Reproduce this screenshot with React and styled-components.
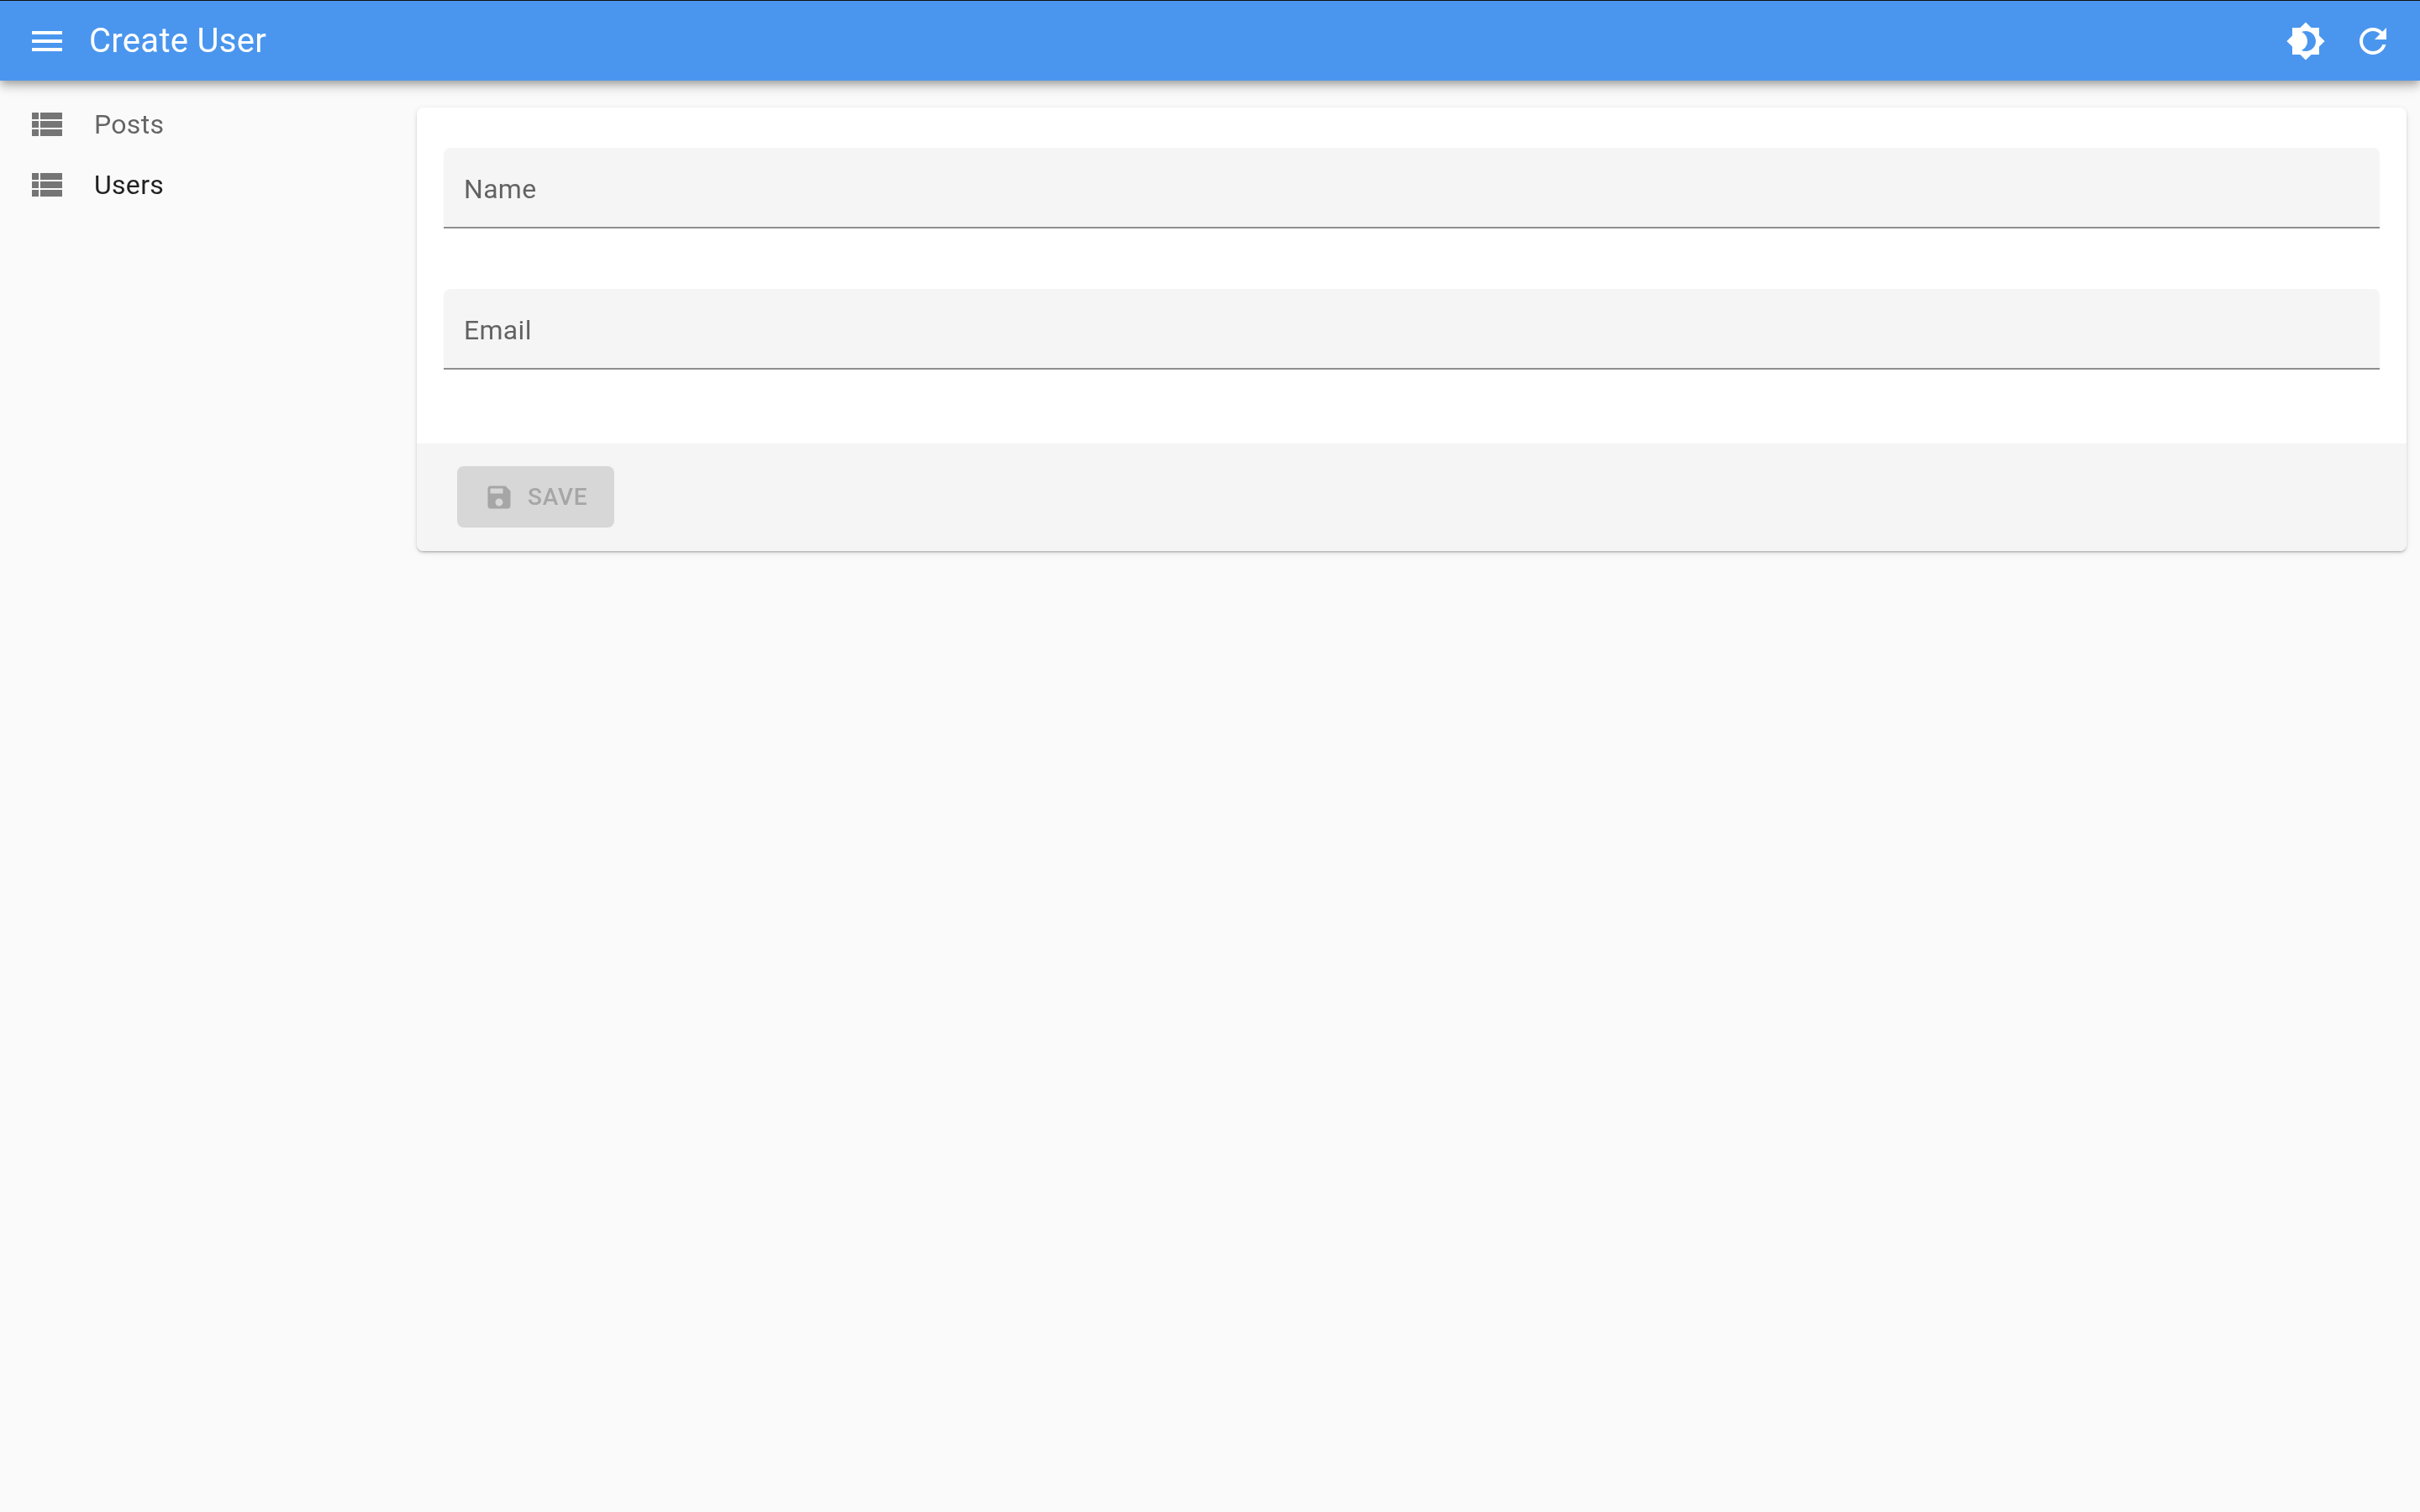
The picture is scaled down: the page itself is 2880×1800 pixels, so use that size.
import React from 'react';
import styled, { createGlobalStyle, css } from 'styled-components';

const GlobalStyle = createGlobalStyle`
    html, body {
        margin: 0;
        padding: 0;
        background: #fafafa;
        font-family: Roboto, "Liberation Sans", sans-serif;
    }
`

const paths = {
    menu: 'M3 18h18v-2H3v2zm0-5h18v-2H3v2zm0-7v2h18V6H3z',
    list: 'M3 14h4v-4H3v4zm0 5h4v-4H3v4zM3 9h4V5H3v4zm5 5h13v-4H8v4zm0 5h13v-4H8v4zM8 5v4h13V5H8z',
    brightness: 'M20 8.69V4h-4.69L12 .69 8.69 4H4v4.69L.69 12 4 15.31V20h4.69L12 23.31 15.31 20H20v-4.69L23.31 12 20 8.69zM12 18c-.89 0-1.74-.2-2.5-.55C11.56 16.5 13 14.42 13 12s-1.44-4.5-3.5-5.45C10.26 6.2 11.11 6 12 6c3.31 0 6 2.69 6 6s-2.69 6-6 6z',
    refresh: 'M17.65 6.35C16.2 4.9 14.21 4 12 4c-4.42 0-7.99 3.58-7.99 8s3.57 8 7.99 8c3.73 0 6.84-2.55 7.73-6h-2.08c-.82 2.33-3.04 4-5.65 4-3.31 0-6-2.69-6-6s2.69-6 6-6c1.66 0 3.14.69 4.22 1.78L13 11h7V4l-2.35 2.35z',
    save: 'M17 3H5c-1.11 0-2 .9-2 2v14c0 1.1.89 2 2 2h14c1.1 0 2-.9 2-2V7l-4-4zm-5 16c-1.66 0-3-1.34-3-3s1.34-3 3-3 3 1.34 3 3-1.34 3-3 3zm3-10H5V5h10v4z',
}

const Icon = ({ name, size = 48, color }) => (
    <IconSvg viewBox="0 0 24 24" $size={size} $color={color}>
        <path d={paths[name]} />
    </IconSvg>
)

const App = () => {
    return (
        <Page>
            <GlobalStyle />
            <AppBar>
                <Icon name="menu" color="#fff" />
                <Title>Create User</Title>
                <Actions>
                    <Icon name="brightness" color="#fff" />
                    <Icon name="refresh" color="#fff" />
                </Actions>
            </AppBar>
            <Body>
                <Sidebar>
                    <MenuItem>
                        <Icon name="list" color="#757575" />
                        <MenuLabel>Posts</MenuLabel>
                    </MenuItem>
                    <MenuItem $active>
                        <Icon name="list" color="#757575" />
                        <MenuLabel>Users</MenuLabel>
                    </MenuItem>
                </Sidebar>
                <Card>
                    <Form>
                        <Field><FieldLabel>Name</FieldLabel></Field>
                        <Field><FieldLabel>Email</FieldLabel></Field>
                    </Form>
                    <Toolbar>
                        <SaveButton disabled>
                            <Icon name="save" size={36} color="#a6a6a6" />
                            <ButtonText>SAVE</ButtonText>
                        </SaveButton>
                    </Toolbar>
                </Card>
            </Body>
        </Page>
    )
}

export default App

// own layer, so the text gets grey antialiasing like the reference
const greyText = css`
    will-change: transform;
`

const Page = styled.div`
    min-height: 1800px;
    background: #fafafa;
    display: flex;
    flex-direction: column;
`
const IconSvg = styled.svg`
    width: ${p => p.$size}px;
    height: ${p => p.$size}px;
    fill: ${p => p.$color};
    flex-shrink: 0;
    display: block;
`
const AppBar = styled.header`
    box-sizing: border-box;
    height: 96px;
    display: flex;
    align-items: center;
    padding: 0 32px;
    background: #4a96ee;
    border-top: 1px solid #111;
    box-shadow: 0 4px 8px -2px rgba(0,0,0,.2), 0 8px 10px 0 rgba(0,0,0,.14), 0 2px 20px 0 rgba(0,0,0,.12);
    position: relative;
    z-index: 2;
`
const Title = styled.h6`
    ${greyText}
    margin: 0 0 0 26px;
    flex-grow: 1;
    color: #fff;
    font-size: 40px;
    font-weight: 400;
    letter-spacing: .0075em;
`
const Actions = styled.div`
    display: flex;
    gap: 32px;
`
const Body = styled.main`
    display: flex;
    align-items: flex-start;
    padding: 32px 16px 0 0;
`
const Sidebar = styled.nav`
    width: 496px;
    flex-shrink: 0;
    margin-top: -16px;
    display: flex;
    flex-direction: column;
`
const MenuItem = styled.a`
    height: 72px;
    display: flex;
    align-items: center;
    padding-left: 32px;
    color: ${p => p.$active ? 'rgba(0,0,0,.87)' : 'rgba(0,0,0,.6)'};
`
const MenuLabel = styled.span`
    ${greyText}
    margin-left: 32px;
    font-size: 32px;
    letter-spacing: .00938em;
`
const Card = styled.section`
    flex-grow: 1;
    height: 528px;
    background: #fff;
    border-radius: 8px;
    overflow: hidden;
    display: flex;
    flex-direction: column;
    box-shadow: 0 2px 2px -2px rgba(0,0,0,.2), 0 2px 2px 0 rgba(0,0,0,.14), 0 2px 6px 0 rgba(0,0,0,.12);
`
const Form = styled.div`
    flex-grow: 1;
    padding: 48px 32px 0;
    display: flex;
    flex-direction: column;
    gap: 72px;
`
const Field = styled.div`
    box-sizing: border-box;
    height: 96px;
    display: flex;
    align-items: center;
    padding: 3px 0 0 24px;
    background: #f5f5f5;
    border-radius: 8px 8px 0 0;
    border-bottom: 2px solid #8f8f8f;
`
const FieldLabel = styled.label`
    ${greyText}
    font-size: 32px;
    color: rgba(0,0,0,.6);
    letter-spacing: .00938em;
`
const Toolbar = styled.div`
    box-sizing: border-box;
    height: 128px;
    padding: 27px 0 0 48px;
    background: #f5f5f5;
`
const SaveButton = styled.button`
    box-sizing: border-box;
    width: 187px;
    height: 73px;
    display: flex;
    align-items: center;
    gap: 16px;
    padding: 0 0 0 32px;
    border: none;
    border-radius: 8px;
    background: #d7d7d7;
    color: #a6a6a6;
    font-family: inherit;
    font-size: 28px;
    font-weight: 500;
    letter-spacing: .02857em;
`
const ButtonText = styled.span`
    ${greyText}
`
